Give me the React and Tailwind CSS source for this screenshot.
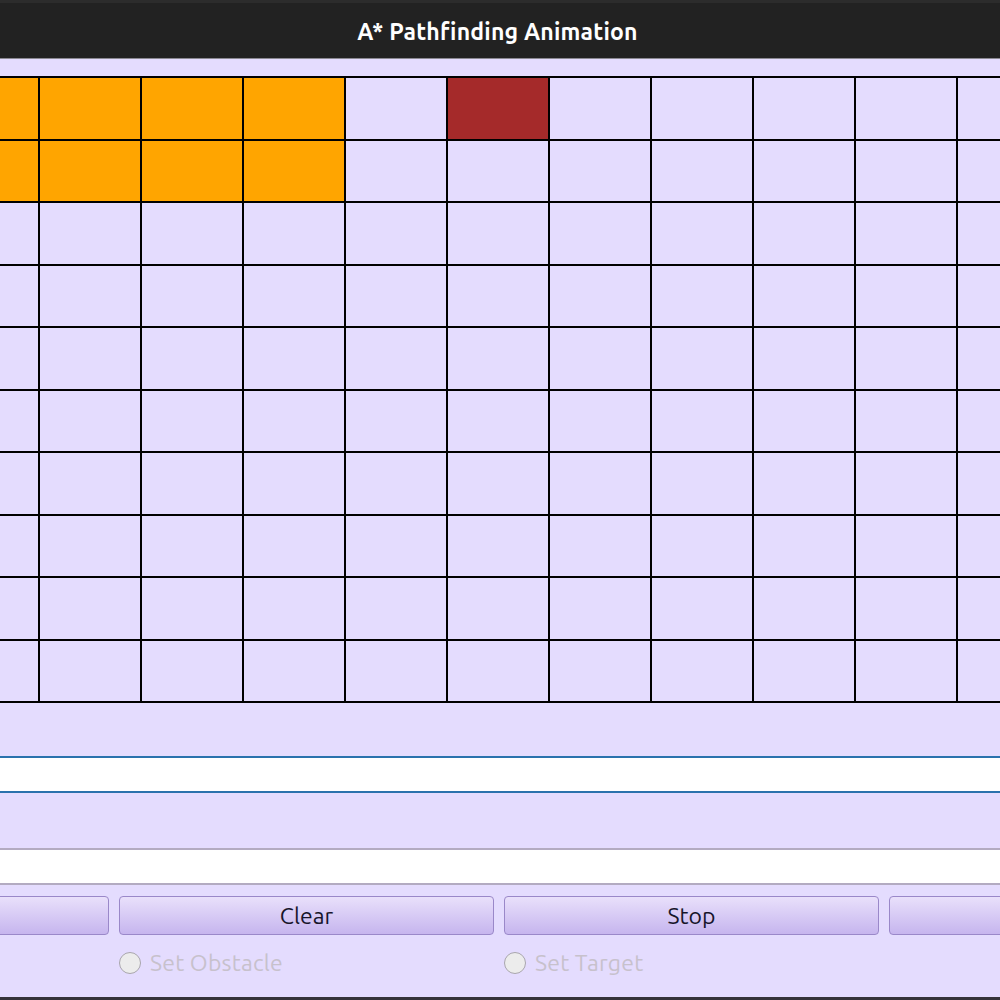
import React from 'react';

const ROWS = 10;
const COLS = 11;

// cells painted in the reference: [row, col] -> colour
const cellColor = (r, c) => {
  if (r < 2 && c < 4) return 'bg-[#ffa500]';
  if (r === 0 && c === 5) return 'bg-[#a52a2a]';
  return 'bg-[#e4dcfe]';
};

const Grid = () => {
  const cells = [];
  for (let r = 0; r < ROWS; r++) {
    for (let c = 0; c < COLS; c++) {
      cells.push(<div key={`${r}-${c}`} className={cellColor(r, c)} />);
    }
  }
  return (
    <div className="h-[627px] overflow-hidden">
      <div className="ml-[-64px] w-[1124px] h-full bg-black p-[2px] grid grid-cols-[repeat(11,100px)] grid-rows-10 gap-[2px]">
        {cells}
      </div>
    </div>
  );
};

const Button = ({ label }) => (
  <button className="w-[375px] h-[39px] shrink-0 rounded-[4px] border border-[#9a88c9] bg-gradient-to-b from-[#e9e0fb] to-[#c6b5ee] text-[23px] text-[#17152a] leading-none">
    {label}
  </button>
);

const Radio = ({ label }) => (
  <div className="w-[375px] shrink-0 flex items-center gap-[9px]">
    <span className="w-[22px] h-[22px] rounded-full border border-[#a9a6ad] bg-[#ececec]" />
    <span className="text-[23px] tracking-[0.2px] text-[#c7c1cc] leading-none">{label}</span>
  </div>
);

export default function App() {
  return (
    <div
      className="w-[1000px] h-[1000px] overflow-hidden bg-[#e4dcfe] flex flex-col"
      style={{ fontFamily: 'Ubuntu, "Noto Sans", "Open Sans", sans-serif' }}
    >
      <div className="h-[58px] shrink-0 bg-[#222222] border-t-[3px] border-[#2c2c2c] flex items-center justify-center">
        <span className="text-white font-bold text-[23px] tracking-[0.2px] pt-[3px] pr-[5px]">A* Pathfinding Animation</span>
      </div>
      <div className="h-[1px] bg-[#8c8a92] shrink-0" />
      <div className="h-[17px] shrink-0" />
      <Grid />
      <div className="h-[53px] shrink-0" />
      <div className="h-[37px] shrink-0 bg-white border-y-2 border-[#2a72ad]" />
      <div className="h-[55px] shrink-0" />
      <div className="h-[37px] shrink-0 bg-white border-y-2 border-[#b3abc1]" />
      <div className="flex-1 flex flex-col">
        <div className="ml-[-266px] mt-[11px] flex gap-[10px]">
          <Button label="" />
          <Button label="Clear" />
          <Button label="Stop" />
          <Button label="" />
        </div>
        <div className="ml-[-266px] mt-[16px] flex gap-[10px]">
          <div className="w-[375px] shrink-0" />
          <Radio label="Set Obstacle" />
          <Radio label="Set Target" />
          <div className="w-[375px] shrink-0" />
        </div>
        <div className="flex-1" />
        <div className="h-[3px] bg-[#35333a]" />
      </div>
    </div>
  );
}
